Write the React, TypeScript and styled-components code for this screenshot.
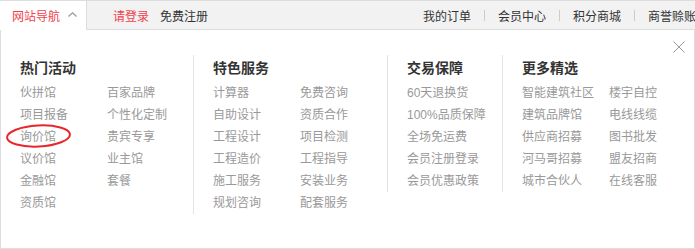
import styled, { createGlobalStyle } from 'styled-components';

const GlobalStyle = createGlobalStyle`
  body {
    margin: 0;
    background: #fff;
    font-family: 'Liberation Sans', 'Noto Sans CJK SC', sans-serif;
    font-size: 12px;
  }
`;

interface Section {
  title: string;
  width: number;
  cols: number;
  links: string[];
}

const sections: Section[] = [
  {
    title: '热门活动',
    width: 192,
    cols: 2,
    links: ['伙拼馆', '百家品牌', '项目报备', '个性化定制', '询价馆', '贵宾专享', '议价馆', '业主馆', '金融馆', '套餐', '资质馆'],
  },
  {
    title: '特色服务',
    width: 194,
    cols: 2,
    links: ['计算器', '免费咨询', '自助设计', '资质合作', '工程设计', '项目检测', '工程造价', '工程指导', '施工服务', '安装业务', '规划咨询', '配套服务'],
  },
  {
    title: '交易保障',
    width: 115,
    cols: 1,
    links: ['60天退换货', '100%品质保障', '全场免运费', '会员注册登录', '会员优惠政策'],
  },
  {
    title: '更多精选',
    width: 192,
    cols: 2,
    links: ['智能建筑社区', '楼宇自控', '建筑品牌馆', '电线线缆', '供应商招募', '图书批发', '河马哥招募', '盟友招商', '城市合伙人', '在线客服'],
  },
];

const topLinks = ['我的订单', '会员中心', '积分商城', '商誉赊账'];

const App = () => {
  return (
    <>
      <GlobalStyle />
      <Page>
        <Header>
          <NavTab>
            <span>网站导航</span>
            <svg width='9' height='5' viewBox='0 0 9 5'>
              <path d='M0.5 4.5 L4.5 0.8 L8.5 4.5' fill='none' stroke='#999' strokeWidth='1.2' />
            </svg>
          </NavTab>
          <LoginLinks>
            <RedText>请登录</RedText>
            <span>免费注册</span>
          </LoginLinks>
          <RightNav>
            {topLinks.map((t, i) => (
              <NavItem key={t} $first={i === 0}>
                {t}
              </NavItem>
            ))}
          </RightNav>
        </Header>

        <Panel>
          <CloseButton>
            <svg width='12' height='12' viewBox='0 0 12 12'>
              <path d='M0.5 0.5 L11.5 11.5 M11.5 0.5 L0.5 11.5' stroke='#999' strokeWidth='1' />
            </svg>
          </CloseButton>
          {sections.map((s, i) => (
            <Column key={s.title} $width={s.width} $first={i === 0}>
              <Heading>{s.title}</Heading>
              <LinkGrid $cols={s.cols}>
                {s.links.map((l) => (
                  <LinkItem key={l}>{l}</LinkItem>
                ))}
              </LinkGrid>
            </Column>
          ))}
        </Panel>

        <Mark width='70' height='26' viewBox='0 0 70 26'>
          <ellipse cx='34.5' cy='13' rx='31.5' ry='10.5' fill='none' stroke='#e8262b' strokeWidth='2' transform='rotate(-3 34.5 13)' />
        </Mark>
      </Page>
    </>
  );
};

const Page = styled.div`
  position: relative;
  width: 695px;
  height: 249px;
  overflow: hidden;
`;

const Header = styled.div`
  display: flex;
  align-items: stretch;
  height: 28px;
  border-top: 1px solid #ddd;
  border-bottom: 1px solid #ddd;
  background: #f2f2f2;
  color: #333;
  white-space: nowrap;
  & > * {
    flex-shrink: 0;
  }
`;

const NavTab = styled.div`
  display: flex;
  align-items: center;
  gap: 8px;
  width: 87px;
  box-sizing: border-box;
  padding-left: 12px;
  margin-bottom: -1px;
  background: #fff;
  border-right: 1px solid #ddd;
  color: #f0414d;
  svg {
    margin-top: -2px;
  }
`;

const LoginLinks = styled.div`
  display: flex;
  align-items: center;
  gap: 11px;
  margin-left: 26px;
`;

const RedText = styled.span`
  color: #f0414d;
`;

const RightNav = styled.div`
  display: flex;
  align-items: center;
  margin-left: 215px;
`;

const NavItem = styled.span<{ $first: boolean }>`
  display: flex;
  align-items: center;
  &::before {
    content: '';
    display: ${(p) => (p.$first ? 'none' : 'block')};
    width: 1px;
    height: 11px;
    margin: 0 13px;
    background: #ccc;
  }
`;

const Panel = styled.div`
  position: relative;
  display: flex;
  align-items: flex-start;
  height: 219px;
  box-sizing: border-box;
  padding-top: 25px;
  border: 1px solid #ddd;
  border-top: none;
`;

const CloseButton = styled.div`
  position: absolute;
  top: 11px;
  right: 9px;
  width: 12px;
  height: 12px;
  cursor: pointer;
  svg {
    display: block;
  }
`;

const Column = styled.div<{ $width: number; $first: boolean }>`
  width: ${(p) => p.$width}px;
  box-sizing: border-box;
  padding-left: 19px;
  border-left: ${(p) => (p.$first ? 'none' : '1px solid #e3e3e3')};
`;

const Heading = styled.h3`
  margin: 0;
  font-size: 14px;
  font-weight: 700;
  line-height: 27px;
  color: #333;
`;

const LinkGrid = styled.div<{ $cols: number }>`
  display: grid;
  grid-template-columns: ${(p) => (p.$cols > 1 ? `repeat(${p.$cols}, 87px)` : '1fr')};
  grid-auto-rows: 22px;
`;

const LinkItem = styled.a`
  line-height: 22px;
  color: #999;
  white-space: nowrap;
  cursor: pointer;
`;

const Mark = styled.svg`
  position: absolute;
  left: 4px;
  top: 123px;
  pointer-events: none;
`;

export default App;
